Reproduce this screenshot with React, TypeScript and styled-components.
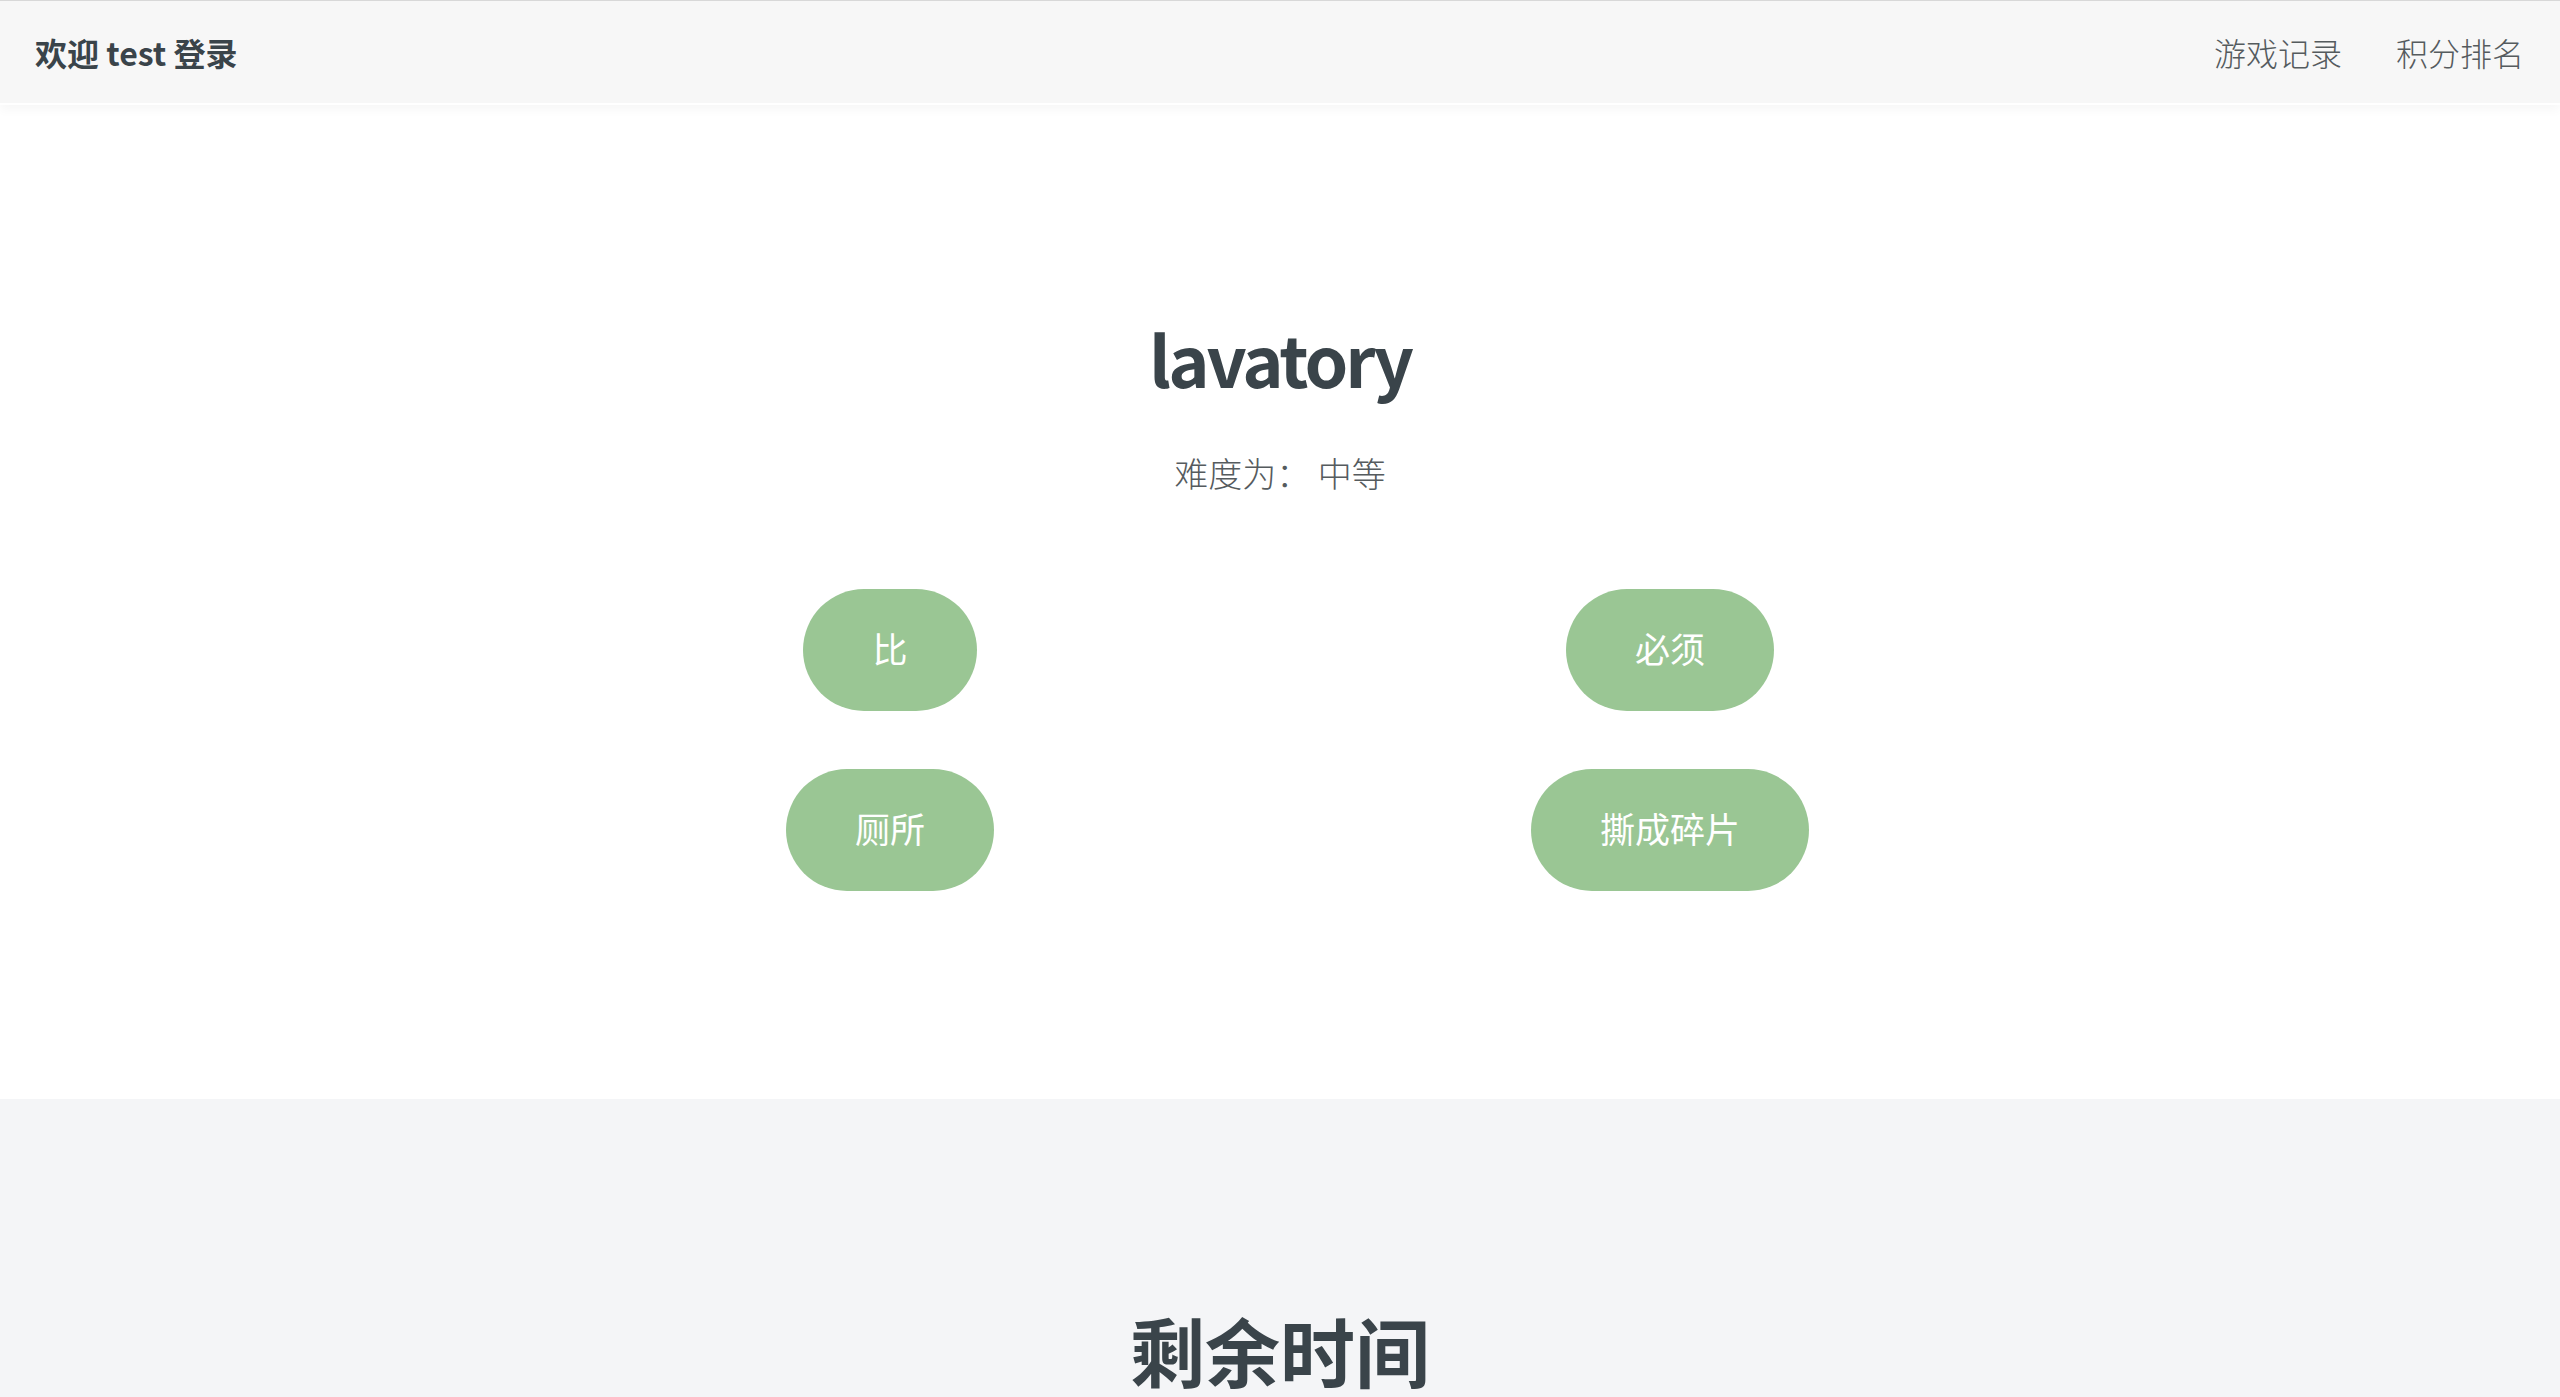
import React from "react";
import styled, { createGlobalStyle } from "styled-components";

const GlobalStyle = createGlobalStyle`
  html, body {
    margin: 0;
    padding: 0;
    background: #f4f5f7;
    font-family: "Noto Sans CJK SC", "Noto Sans", sans-serif;
    color: #3a444a;
  }
  * { box-sizing: border-box; }
`;

const Page = styled.div`
  display: flex;
  flex-direction: column;
  min-height: 1397px;
`;

const NavBar = styled.header`
  height: 105px;
  display: flex;
  align-items: center;
  justify-content: space-between;
  padding: 0 36px 0 35px;
  background: #f7f7f7;
  border-top: 1px solid #d8d8d8;
  border-bottom: 2px solid #ffffff;
  box-shadow: 0 5px 10px rgba(0, 0, 0, 0.035);
  position: relative;
  z-index: 1;
`;

const Brand = styled.div`
  font-size: 32px;
  line-height: 1;
  font-weight: 700;
  color: #3a444a;
`;

const NavLinks = styled.nav`
  display: flex;
  gap: 54px;
`;

const NavLink = styled.a`
  font-size: 32px;
  line-height: 1;
  font-weight: 300;
  color: #555b5e;
  text-decoration: none;
  cursor: pointer;
`;

const QuizSection = styled.section`
  background: #ffffff;
  padding: 218px 0 208px;
  display: flex;
  flex-direction: column;
  align-items: center;
`;

const Word = styled.h1`
  margin: 0;
  font-size: 70px;
  line-height: 1;
  font-weight: 700;
  letter-spacing: -3px;
  color: #3a444a;
`;

const Difficulty = styled.p`
  margin: 63px 0 0;
  font-size: 34px;
  line-height: 1;
  font-weight: 300;
  color: #555b5e;
`;

const Options = styled.div`
  margin-top: 99px;
  width: 1560px;
  display: grid;
  grid-template-columns: 1fr 1fr;
  row-gap: 58px;
  justify-items: center;
`;

const OptionButton = styled.button`
  height: 122px;
  padding: 0 69px 5px;
  display: flex;
  align-items: center;
  justify-content: center;
  border: none;
  border-radius: 61px;
  background: #9ac694;
  color: #ffffff;
  font-family: "Noto Sans CJK SC", "Noto Sans", sans-serif;
  font-size: 35px;
  line-height: 1;
  font-weight: 400;
  cursor: pointer;
`;

const TimerSection = styled.section`
  flex: 1;
  background: #f4f5f7;
  padding-top: 213px;
  display: flex;
  flex-direction: column;
  align-items: center;
`;

const TimerTitle = styled.h2`
  margin: 0;
  font-size: 75px;
  line-height: 1;
  font-weight: 700;
  color: #3a444a;
`;

const options = ["比", "必须", "厕所", "撕成碎片"];

export default function App() {
  return (
    <>
      <GlobalStyle />
      <Page>
        <NavBar>
          <Brand>欢迎 test 登录</Brand>
          <NavLinks>
            <NavLink>游戏记录</NavLink>
            <NavLink>积分排名</NavLink>
          </NavLinks>
        </NavBar>
        <QuizSection>
          <Word>lavatory</Word>
          <Difficulty>难度为： 中等</Difficulty>
          <Options>
            {options.map((o) => (
              <OptionButton key={o}>{o}</OptionButton>
            ))}
          </Options>
        </QuizSection>
        <TimerSection>
          <TimerTitle>剩余时间</TimerTitle>
        </TimerSection>
      </Page>
    </>
  );
}
